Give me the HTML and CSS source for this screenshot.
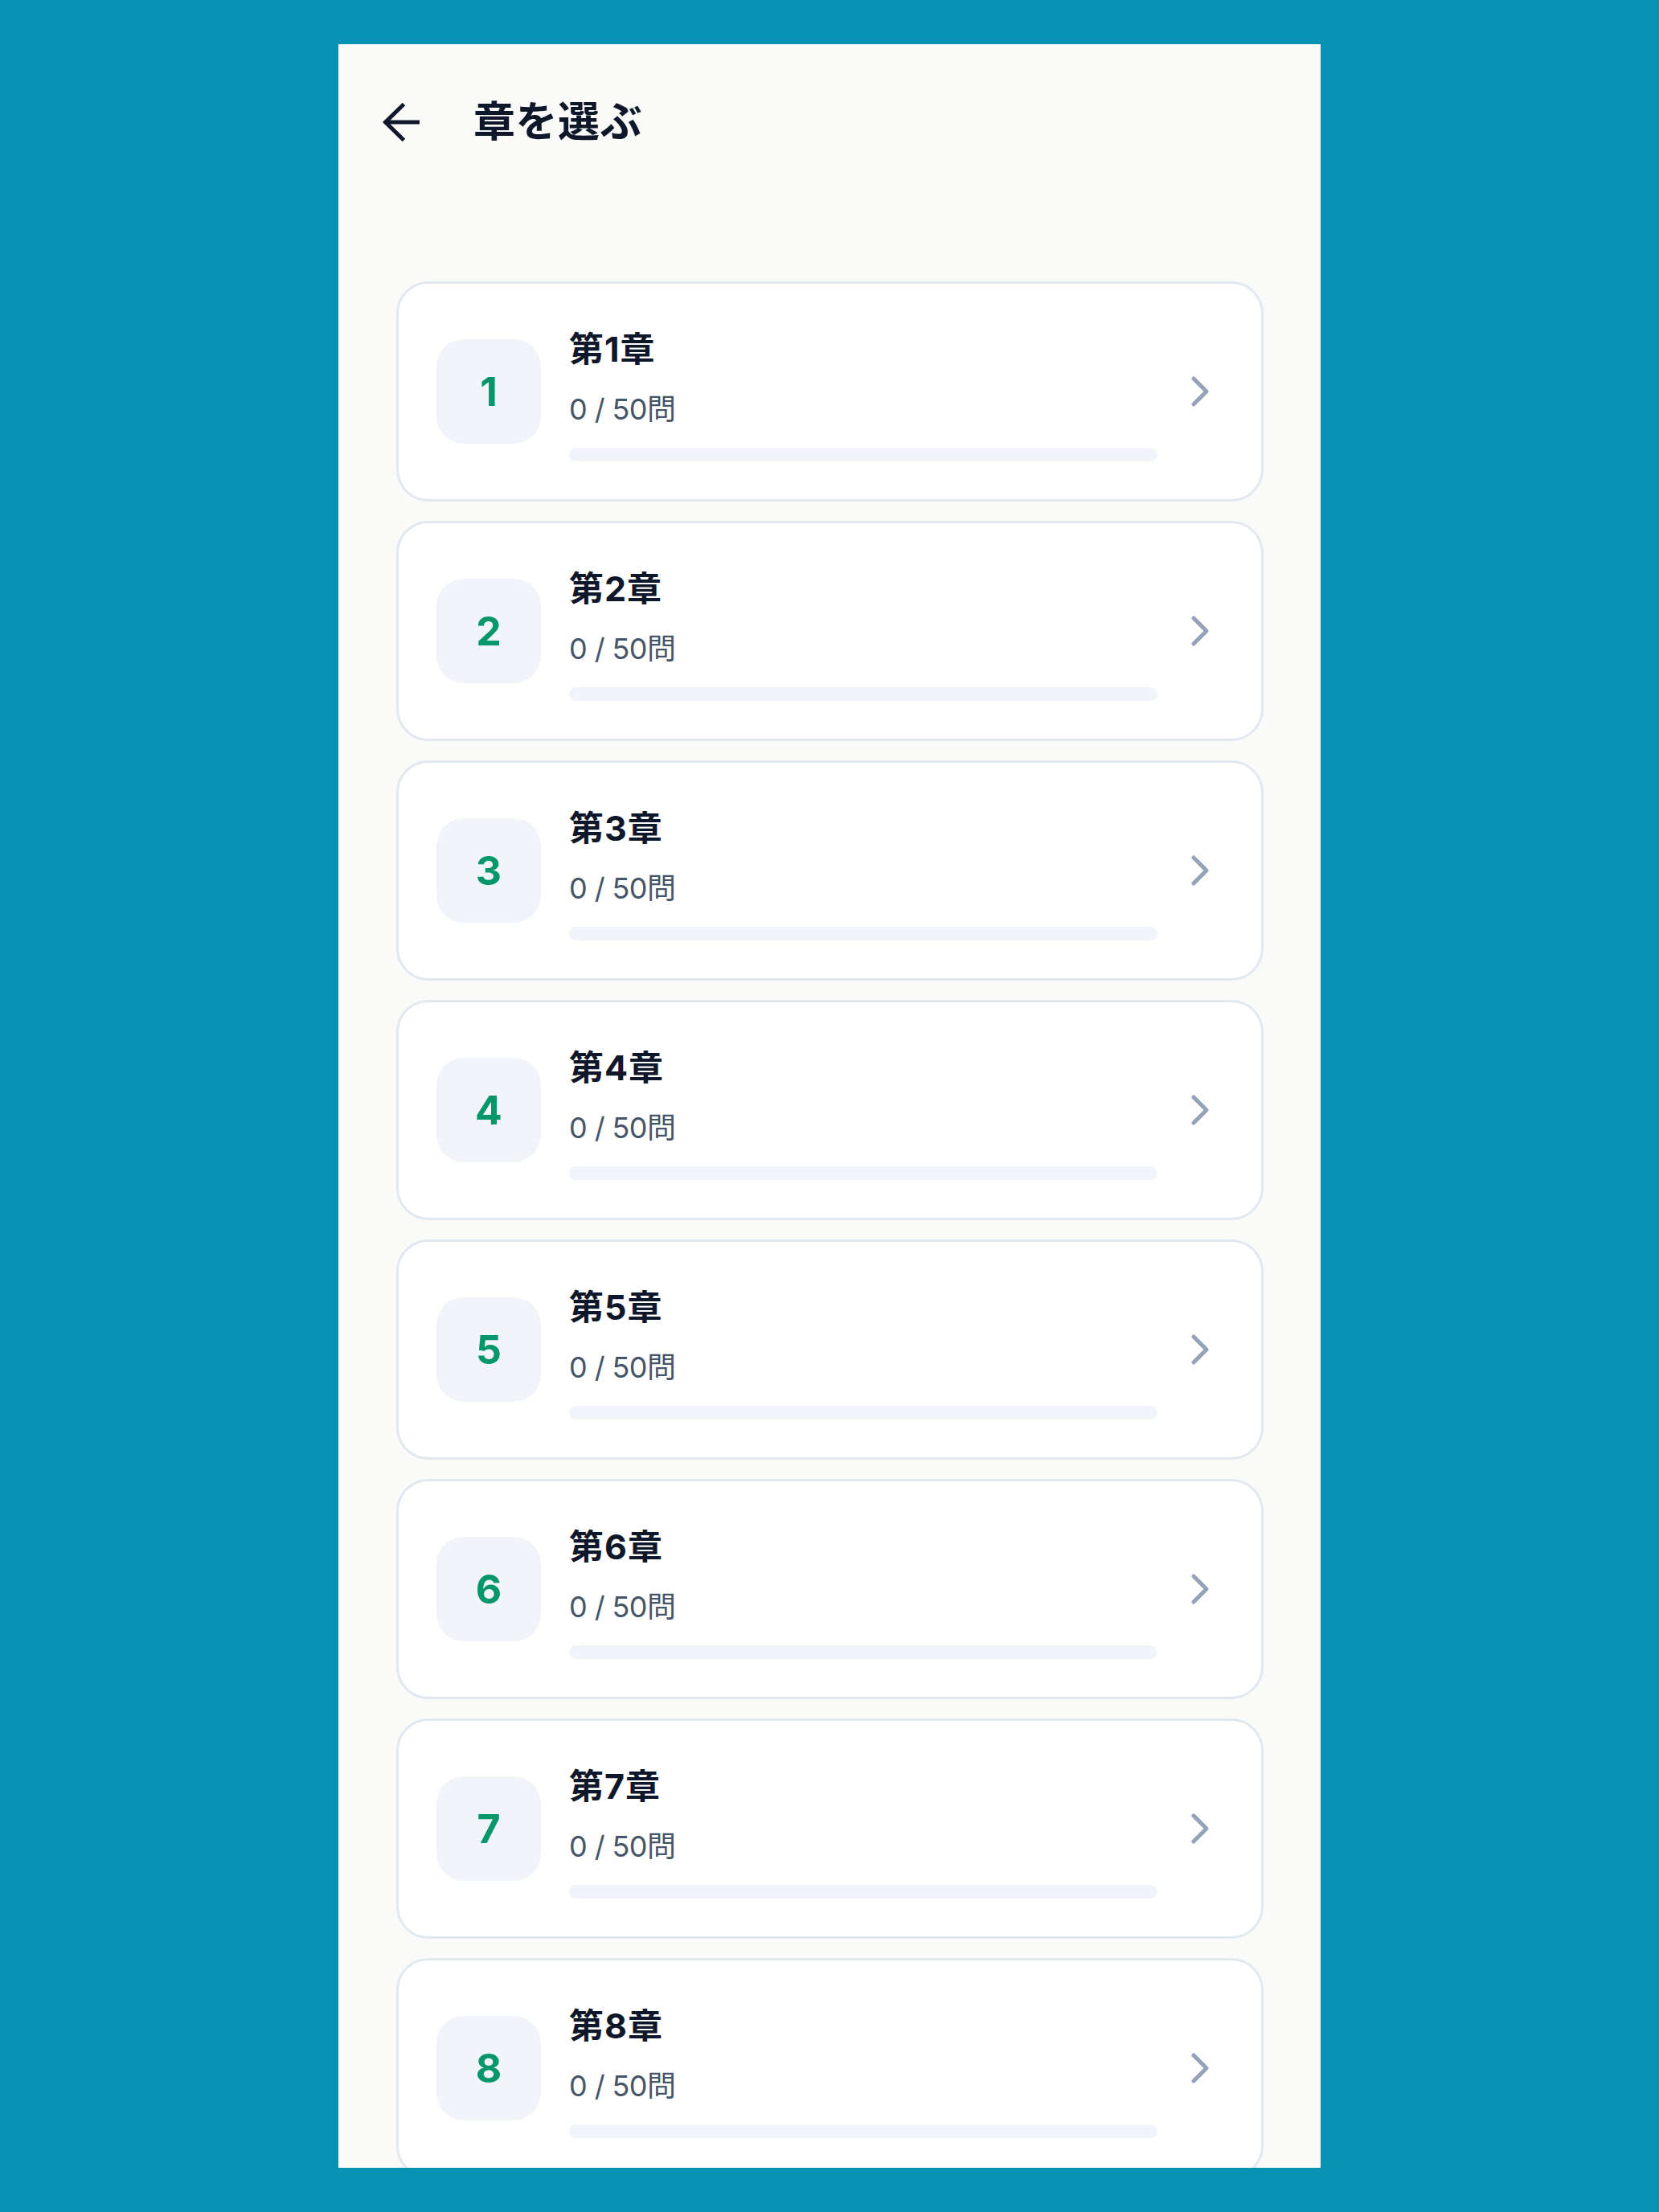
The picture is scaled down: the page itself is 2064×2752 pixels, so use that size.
FILE: index.html
```html
<!DOCTYPE html>
<html lang="ja">
<head>
<meta charset="utf-8">
<title>章を選ぶ</title>
<link rel="stylesheet" href="styles.css">
</head>
<body>
<div class="phone">
  <header class="header">
    <svg class="back" width="50" height="50" viewBox="0 0 50 50" aria-hidden="true">
      <path d="M28.5 2.5 L5.5 25 L28.5 47.5" fill="none" stroke="#0f172a" stroke-width="5" stroke-linejoin="miter" stroke-linecap="butt"/>
      <path d="M5.5 25 H48" fill="none" stroke="#0f172a" stroke-width="5" stroke-linecap="butt"/>
    </svg>
    <h1 class="title">章を選ぶ</h1>
  </header>
  <main class="list">
    <div class="card"><div class="badge">1</div><div class="info"><div class="name">第1章</div><div class="count">0 / 50問</div><div class="bar"></div></div><svg class="chev" width="64" height="64" viewBox="0 0 24 24"><path d="m9 18 6-6-6-6" fill="none" stroke="#94a3b8" stroke-width="1.9" stroke-linecap="round" stroke-linejoin="round"/></svg></div>
    <div class="card"><div class="badge">2</div><div class="info"><div class="name">第2章</div><div class="count">0 / 50問</div><div class="bar"></div></div><svg class="chev" width="64" height="64" viewBox="0 0 24 24"><path d="m9 18 6-6-6-6" fill="none" stroke="#94a3b8" stroke-width="1.9" stroke-linecap="round" stroke-linejoin="round"/></svg></div>
    <div class="card"><div class="badge">3</div><div class="info"><div class="name">第3章</div><div class="count">0 / 50問</div><div class="bar"></div></div><svg class="chev" width="64" height="64" viewBox="0 0 24 24"><path d="m9 18 6-6-6-6" fill="none" stroke="#94a3b8" stroke-width="1.9" stroke-linecap="round" stroke-linejoin="round"/></svg></div>
    <div class="card"><div class="badge">4</div><div class="info"><div class="name">第4章</div><div class="count">0 / 50問</div><div class="bar"></div></div><svg class="chev" width="64" height="64" viewBox="0 0 24 24"><path d="m9 18 6-6-6-6" fill="none" stroke="#94a3b8" stroke-width="1.9" stroke-linecap="round" stroke-linejoin="round"/></svg></div>
    <div class="card"><div class="badge">5</div><div class="info"><div class="name">第5章</div><div class="count">0 / 50問</div><div class="bar"></div></div><svg class="chev" width="64" height="64" viewBox="0 0 24 24"><path d="m9 18 6-6-6-6" fill="none" stroke="#94a3b8" stroke-width="1.9" stroke-linecap="round" stroke-linejoin="round"/></svg></div>
    <div class="card"><div class="badge">6</div><div class="info"><div class="name">第6章</div><div class="count">0 / 50問</div><div class="bar"></div></div><svg class="chev" width="64" height="64" viewBox="0 0 24 24"><path d="m9 18 6-6-6-6" fill="none" stroke="#94a3b8" stroke-width="1.9" stroke-linecap="round" stroke-linejoin="round"/></svg></div>
    <div class="card"><div class="badge">7</div><div class="info"><div class="name">第7章</div><div class="count">0 / 50問</div><div class="bar"></div></div><svg class="chev" width="64" height="64" viewBox="0 0 24 24"><path d="m9 18 6-6-6-6" fill="none" stroke="#94a3b8" stroke-width="1.9" stroke-linecap="round" stroke-linejoin="round"/></svg></div>
    <div class="card"><div class="badge">8</div><div class="info"><div class="name">第8章</div><div class="count">0 / 50問</div><div class="bar"></div></div><svg class="chev" width="64" height="64" viewBox="0 0 24 24"><path d="m9 18 6-6-6-6" fill="none" stroke="#94a3b8" stroke-width="1.9" stroke-linecap="round" stroke-linejoin="round"/></svg></div>
  </main>
</div>
</body>
</html>
```

FILE: styles.css
```css
html, body {
  margin: 0;
  padding: 0;
}
body {
  background: #0891b2;
  font-family: "Inter", "Noto Sans CJK JP", sans-serif;
  height: 2752px;
  overflow: hidden;
}
.phone {
  margin: 55px 0 0 421px;
  width: 1222px;
  height: 2642px;
  background: #fafaf9;
  overflow: hidden;
  box-sizing: border-box;
}
.header {
  height: 192px;
  display: flex;
  align-items: center;
  padding-left: 53px;
  padding-top: 2px;
  box-sizing: border-box;
}
.back {
  display: block;
  flex: none;
}
.title {
  margin: 0 0 0 65px;
  font-size: 52px;
  font-weight: 700;
  color: #0f172a;
  line-height: 1;
  letter-spacing: 0.5px;
}
.list {
  padding: 103px 71px 0 72px;
  display: flex;
  flex-direction: column;
  gap: 24px;
}
.card {
  flex: none;
  height: 274px;
  box-sizing: border-box;
  background: #ffffff;
  border: 3px solid #e2e8f0;
  border-radius: 40px;
  display: flex;
  align-items: center;
  padding: 0 44px 0 47px;
}
.badge {
  flex: none;
  width: 130px;
  height: 130px;
  border-radius: 34px;
  background: #f1f5f9;
  color: #059669;
  font-size: 50px;
  font-weight: 700;
  display: flex;
  align-items: center;
  justify-content: center;
}
.info {
  flex: 1;
  margin-left: 35px;
  padding-top: 8px;
  display: flex;
  flex-direction: column;
}
.name {
  font-size: 43px;
  font-weight: 700;
  color: #0f172a;
  line-height: 52px;
  letter-spacing: 1px;
}
.count {
  margin-top: 26px;
  font-size: 36px;
  letter-spacing: -0.6px;
  color: #475569;
  line-height: 46px;
}
.bar {
  margin-top: 25px;
  height: 17px;
  border-radius: 9px;
  background: #f1f5f9;
}
.chev {
  flex: none;
  margin-left: 21px;
  display: block;
}
```
